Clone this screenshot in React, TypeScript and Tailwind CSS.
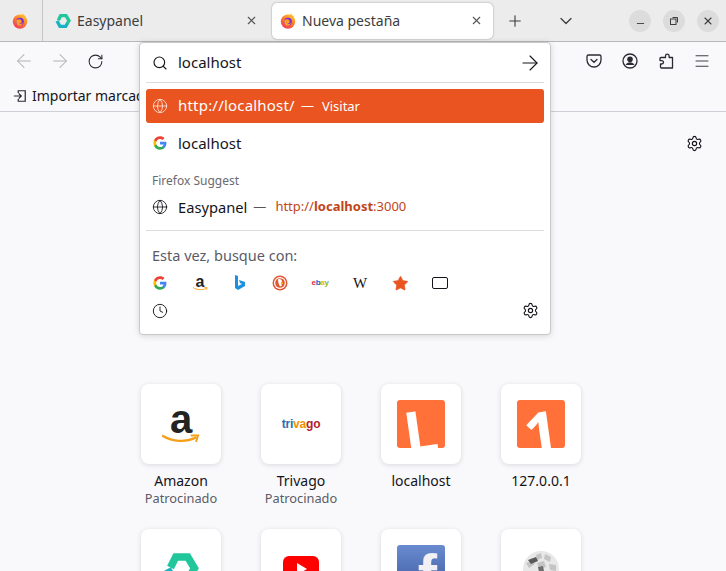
import { ArrowLeft, ArrowRight, ChevronDown, Clock, Globe, Menu, Minus, Plus, RotateCw, Search, Settings, Star, X } from 'lucide-react';

const SANS = "font-['Noto_Sans',sans-serif]";

function FirefoxIcon() {
  return (
    <svg width="16" height="16" viewBox="0 0 16 16" className="shrink-0">
      <defs>
        <linearGradient id="ff" x1="0.8" y1="0" x2="0.2" y2="1">
          <stop offset="0" stopColor="#ffcb2d" />
          <stop offset="0.45" stopColor="#ff7a2d" />
          <stop offset="1" stopColor="#f0335f" />
        </linearGradient>
      </defs>
      <circle cx="8" cy="8.6" r="7.2" fill="url(#ff)" />
      <path d="M10 0.6c1.6 1 3.6 2.6 4.4 5L11 5z" fill="#ffb72d" />
      <circle cx="8" cy="8.6" r="3.9" fill="#7b2fd0" />
      <path d="M4.4 7c1.6-1 4-1 5 0.6 1 1.6-0.4 3-2 3.2 1.6 0.6 3.4-0.2 4-2-0.2 3-3 4.6-5.4 3.6C4.6 11.6 3.8 9 4.4 7z" fill="#ff9a2d" />
    </svg>
  );
}

function EasypanelIcon({ size }: { size: number }) {
  return (
    <svg width={size} height={size} viewBox="0 0 48 48" fill="none" strokeWidth="10" className="shrink-0">
      <path d="M10 22L17 8H33L42 23L36 33" stroke="#1fc79a" />
      <path d="M6 24L15 40H32L37 32" stroke="#17b3c4" />
    </svg>
  );
}

function GoogleIcon() {
  return (
    <svg width="14" height="14" viewBox="0 0 24 24" className="shrink-0">
      <path d="M23 12.3c0-.8-.1-1.600-.2-2.300H12v4.400h6.200c-.3 1.400-1.100 2.600-2.300 3.400v2.800h3.700c2.100-2 3.400-4.900 3.400-8.300z" fill="#4285f4" />
      <path d="M12 23.500c3.100 0 5.700-1 7.600-2.800l-3.700-2.900c-1 .7-2.300 1.100-3.900 1.100-3 0-5.500-2-6.400-4.700H1.800v2.900c1.900 3.800 5.800 6.400 10.200 6.400z" fill="#34a853" />
      <path d="M5.600 14.200c-.5-1.400-.5-3 0-4.400V6.900H1.800c-1.600 3.200-1.600 7 0 10.200z" fill="#fbbc05" />
      <path d="M12 5c1.700 0 3.200.6 4.400 1.700l3.300-3.300C17.700 1.600 15.100.5 12 .5 7.600.5 3.700 3.100 1.800 6.900l3.800 2.900C6.500 7 9 5 12 5z" fill="#ea4335" />
    </svg>
  );
}

function AmazonSmile({ width }: { width: number }) {
  return (
    <svg width={width} height={width * 0.25} viewBox="0 0 40 10" className="shrink-0">
      <path d="M1 2c10 6 24 7 34 2" fill="none" stroke="#f59e18" strokeWidth="2.4" strokeLinecap="round" />
      <path d="M31 1.500l7 0-2 6" fill="none" stroke="#f59e18" strokeWidth="2" strokeLinecap="round" />
    </svg>
  );
}

function TopSite({ label, sub, children }: { label?: string; sub?: string; children: React.ReactNode }) {
  return (
    <div className="flex w-[120px] flex-col items-center">
      <div className="flex h-20 w-20 items-center justify-center overflow-hidden rounded-lg bg-white shadow-[0_1px_5px_rgba(30,30,60,0.14)]">
        {children}
      </div>
      {label && <span className="mt-[7px] text-[14px] leading-[20px] text-[#15141a]">{label}</span>}
      {sub && <span className="text-[12.8px] leading-[15px] text-[#5b5b66]">{sub}</span>}
    </div>
  );
}

function SearchShortcut({ children }: { children: React.ReactNode }) {
  return <div className="flex h-5 w-10 items-center justify-center">{children}</div>;
}

export default function App() {
  return (
    <div className={`relative flex h-[571px] w-[726px] flex-col overflow-hidden bg-[#f9f9fb] ${SANS}`}>
      {/* Tab strip */}
      <div className="flex h-[42px] shrink-0 items-center border-b border-[#b8b8b8] bg-[#ececec]">
        <div className="flex h-full w-[43px] items-center justify-center border-r border-[#c4c4c4] pr-[2px]">
          <FirefoxIcon />
        </div>
        <div className="flex h-full w-[229px] items-center gap-[6px] pl-[12px] pr-[14px] text-[14px] text-[#3d3d3d]">
          <EasypanelIcon size={16} />
          <span className="flex-1">Easypanel</span>
          <X size={13} className="text-[#555]" />
        </div>
        <div className="flex h-[36px] w-[221px] items-center gap-[6px] rounded-[5px] bg-white pl-[8px] pr-[10px] text-[14px] text-[#3d3d3d] shadow-[0_0_2px_rgba(0,0,0,0.4)]">
          <FirefoxIcon />
          <span className="flex-1">Nueva pestaña</span>
          <X size={13} className="text-[#555]" />
        </div>
        <Plus size={18} strokeWidth={1.5} className="ml-[13px] text-[#3d3d3d]" />
        <ChevronDown size={20} strokeWidth={1.5} className="ml-[32px] text-[#3d3d3d]" />
        <div className="ml-auto flex gap-3 pr-[7px]">
          <div className="flex h-[22px] w-[22px] items-center justify-center rounded-full bg-[#dcdcdc] pt-[6px]">
            <Minus size={11} className="text-[#3d3d3d]" />
          </div>
          <div className="flex h-[22px] w-[22px] items-center justify-center rounded-full bg-[#dcdcdc]">
            <svg width="10" height="10" viewBox="0 0 10 10" fill="none" stroke="#3d3d3d" strokeWidth="1">
              <rect x="1.500" y="3" width="5.500" height="5.500" />
              <path d="M3.500 1.500H8.500V6.500" />
            </svg>
          </div>
          <div className="flex h-[22px] w-[22px] items-center justify-center rounded-full bg-[#dcdcdc]">
            <X size={12} strokeWidth={2.2} className="text-[#3d3d3d]" />
          </div>
        </div>
      </div>

      {/* Nav bar */}
      <div className="flex h-[38px] shrink-0 items-center bg-[#f9f9fb] pl-[13px] pr-[16px]">
        <ArrowLeft size={22} strokeWidth={1.1} className="text-[#b4b4b8]" />
        <ArrowRight size={22} strokeWidth={1.1} className="ml-[14px] text-[#b4b4b8]" />
        <RotateCw size={17} strokeWidth={1.5} className="ml-[16px] text-[#2b2a33]" />
        <div className="ml-auto flex items-center gap-[20px] text-[#2b2a33]">
          <svg width="16" height="16" viewBox="0 0 16 16" fill="none" stroke="currentColor" strokeWidth="1.3">
            <path d="M2.500 2h11A1.500 1.500 0 0 1 15 3.500V7a7 7 0 0 1-14 0V3.500A1.500 1.500 0 0 1 2.500 2z" />
            <path d="M5 6.500l3 2.800 3-2.800" strokeLinecap="round" />
          </svg>
          <svg width="16" height="16" viewBox="0 0 16 16">
            <circle cx="8" cy="8" r="7" fill="none" stroke="currentColor" strokeWidth="1.3" />
            <circle cx="8" cy="6.200" r="2.800" fill="currentColor" />
            <path d="M3.500 12c1-2 2.600-2.800 4.500-2.800s3.500.8 4.500 2.800" fill="currentColor" />
          </svg>
          <svg width="16" height="16" viewBox="0 0 16 16" fill="none" stroke="currentColor" strokeWidth="1.3" strokeLinejoin="round">
            <path d="M7.500 4.500V3a1.800 1.800 0 0 1 3.600 0v1.500H14.500V15H3.500a1 1 0 0 1-1-1V11H3.800a1.700 1.700 0 0 0 0-3.400H2V5.500a1 1 0 0 1 1-1z" />
          </svg>
          <Menu size={18} strokeWidth={1.2} className="-mx-px" />
        </div>
      </div>

      {/* Bookmarks bar */}
      <div className="flex h-[32px] shrink-0 items-center gap-[5px] border-b border-[#cfcfd8] bg-[#f9f9fb] pl-[13px] text-[14px] text-[#15141a]">
        <svg width="14" height="14" viewBox="0 0 16 16" fill="none" stroke="#2b2a33" strokeWidth="1.4">
          <path d="M6 4.500V2h8v12H6v-2.500M1 8h8M6.500 5l3 3-3 3" />
        </svg>
        <span>Importar marcadores...</span>
      </div>

      {/* New tab content */}
      <div className="flex flex-1 flex-col">
        <div className="flex justify-end pr-[23px] pt-[23px]">
          <Settings size={17} strokeWidth={1.6} className="text-[#15141a]" />
        </div>
        <div className="ml-[121px] mt-[232px] grid w-[480px] grid-cols-4 grid-rows-[122px_80px] gap-y-[23px]">
          <TopSite label="Amazon" sub="Patrocinado">
            <div className="flex flex-col items-center">
              <span className="font-['Liberation_Sans',sans-serif] text-[40px] font-bold leading-[30px] text-[#232323]">a</span>
              <AmazonSmile width={38} />
            </div>
          </TopSite>
          <TopSite label="Trivago" sub="Patrocinado">
            <span className="font-['Liberation_Sans',sans-serif] text-[12px] font-bold tracking-[-0.2px]">
              <span className="text-[#1f6fb5]">tri</span>
              <span className="text-[#f48f00]">va</span>
              <span className="text-[#b3222c]">go</span>
            </span>
          </TopSite>
          <TopSite label="localhost">
            <div className="flex h-12 w-12 items-center justify-center overflow-hidden rounded-[3px] bg-[#ff7139]">
              <span className="translate-y-[7px] -rotate-[8deg] text-[60px] font-bold leading-[48px] text-white">L</span>
            </div>
          </TopSite>
          <TopSite label="127.0.0.1">
            <div className="flex h-12 w-12 items-center justify-center overflow-hidden rounded-[3px] bg-[#ff7139]">
              <span className="translate-y-[8px] -rotate-[8deg] text-[60px] font-bold leading-[48px] text-white">1</span>
            </div>
          </TopSite>
          <TopSite>
            <EasypanelIcon size={36} />
          </TopSite>
          <TopSite>
            <svg width="36" height="26" viewBox="0 0 36 26">
              <rect width="36" height="26" rx="6" fill="#ff0000" />
              <path d="M14 7l10 6-10 6z" fill="#fff" />
            </svg>
          </TopSite>
          <TopSite>
            <div className="flex h-12 w-12 items-start justify-end overflow-hidden rounded-[3px] bg-linear-to-b from-[#6a8bd0] to-[#3d5a9e] pr-[8px]">
              <span className="font-['Liberation_Sans',sans-serif] text-[58px] font-bold leading-[60px] text-[#f0f0f5]">f</span>
            </div>
          </TopSite>
          <TopSite>
            <svg width="36" height="36" viewBox="0 0 36 36">
              <circle cx="18" cy="18" r="18" fill="#e8e8e8" />
              <path d="M3 12l7-2 2 3-6 4zM13 4l5-2 1 5-5 2zM22 3l6 3-1 5-6-3zM14 12l7-2 2 6-7 2zM26 13l7 1 0 6-6-1zM6 20l7 0 1 6-6 1z" fill="#c4c4c4" />
              <path d="M5 9l8-3 2 4-7 3z" fill="#5a5a5a" />
              <path d="M15 16l5-1 1 5-5 1z" fill="#6e6e6e" />
            </svg>
          </TopSite>
        </div>
      </div>

      {/* Address bar dropdown */}
      <div className="absolute left-[139px] top-[42px] flex h-[293px] w-[412px] flex-col rounded-[4px] border border-[#c8c8c8] bg-white px-[6px] shadow-[0_1px_6px_rgba(0,0,0,0.15)]">
        <div className="flex h-[40px] shrink-0 items-center border-b border-[#dcdcdc] px-[6px]">
          <Search size={16} strokeWidth={1.7} className="text-[#15141a]" />
          <span className="ml-[10px] flex-1 text-[15px] text-[#15141a]">localhost</span>
          <ArrowRight size={24} strokeWidth={1.1} className="mr-[-4px] text-[#15141a]" />
        </div>
        <div className="mt-[6px] flex h-[34px] shrink-0 items-center rounded-[3px] bg-[#e95420] px-[6px] text-white">
          <Globe size={16} strokeWidth={1.3} className="text-[#ffe4d8]" />
          <span className="-mt-px ml-[10px] text-[15px] tracking-[0.2px]">http://localhost/</span>
          <span className="ml-[6px] text-[13px]">—</span>
          <span className="ml-[8px] mt-px text-[13px]">Visitar</span>
        </div>
        <div className="mt-[3px] flex h-[34px] shrink-0 items-center px-[7px]">
          <GoogleIcon />
          <span className="ml-[11px] text-[15px] text-[#15141a]">localhost</span>
        </div>
        <div className="mt-[11px] flex h-[20px] shrink-0 items-center px-[6px] text-[12px] text-[#6a6a70]">Firefox Suggest</div>
        <div className="mt-px flex h-[30px] shrink-0 items-center px-[6px] text-[#15141a]">
          <Globe size={16} strokeWidth={1.3} />
          <span className="ml-[10px] text-[14.7px]">Easypanel</span>
          <span className="ml-[6px] text-[13px] text-[#555]">—</span>
          <span className="ml-[9px] text-[13px] text-[#c0451a]">
            http://<b>localhost</b>:3000
          </span>
        </div>
        <div className="mt-[8px] border-t border-[#dcdcdc] px-[6px] pt-[14px] text-[14.5px] leading-[20px] text-[#5b5b66]">Esta vez, busque con:</div>
        <div className="-ml-[6px] mt-[8px] flex">
          <SearchShortcut><GoogleIcon /></SearchShortcut>
          <SearchShortcut>
            <div className="flex flex-col items-center">
              <span className="font-['Liberation_Sans',sans-serif] text-[16px] font-bold leading-[11px] text-[#232323]">a</span>
              <AmazonSmile width={15} />
            </div>
          </SearchShortcut>
          <SearchShortcut>
            <svg width="12" height="16" viewBox="0 0 12 16">
              <path d="M1 0l3 1v10l4-2-2-1-1-3 6 2v4l-7 4-3-2z" fill="#1b8fe0" />
            </svg>
          </SearchShortcut>
          <SearchShortcut>
            <svg width="16" height="16" viewBox="0 0 16 16">
              <circle cx="8" cy="8" r="7.500" fill="#de5833" />
              <circle cx="8" cy="8" r="6" fill="#fff" />
              <circle cx="8" cy="8" r="4.800" fill="#de5833" />
              <path d="M6 4.500c2-1 4 0 4 2l-1 2 1 2-2 1c-1-2-2-4-2-7z" fill="#fff" />
              <path d="M8 8.500l3-1v1.500z" fill="#fdd20a" />
            </svg>
          </SearchShortcut>
          <SearchShortcut>
            <span className="font-['Liberation_Sans',sans-serif] text-[8px] font-bold tracking-[-0.3px]">
              <span className="text-[#e53238]">e</span>
              <span className="text-[#0064d2]">b</span>
              <span className="text-[#f5af02]">a</span>
              <span className="text-[#86b817]">y</span>
            </span>
          </SearchShortcut>
          <SearchShortcut>
            <span className="font-['Liberation_Serif',serif] text-[15px] text-[#15141a]">W</span>
          </SearchShortcut>
          <SearchShortcut>
            <Star size={17} fill="#e95420" strokeWidth={1} className="text-[#e95420]" />
          </SearchShortcut>
          <SearchShortcut>
            <div className="h-[12px] w-[16px] rounded-[2px] border border-[#15141a]" />
          </SearchShortcut>
        </div>
        <div className="mt-[9px] flex items-center justify-between px-[6px]">
          <Clock size={16} strokeWidth={1.4} className="text-[#15141a]" />
          <Settings size={17} strokeWidth={1.6} className="-mr-px text-[#15141a]" />
        </div>
      </div>
    </div>
  );
}
